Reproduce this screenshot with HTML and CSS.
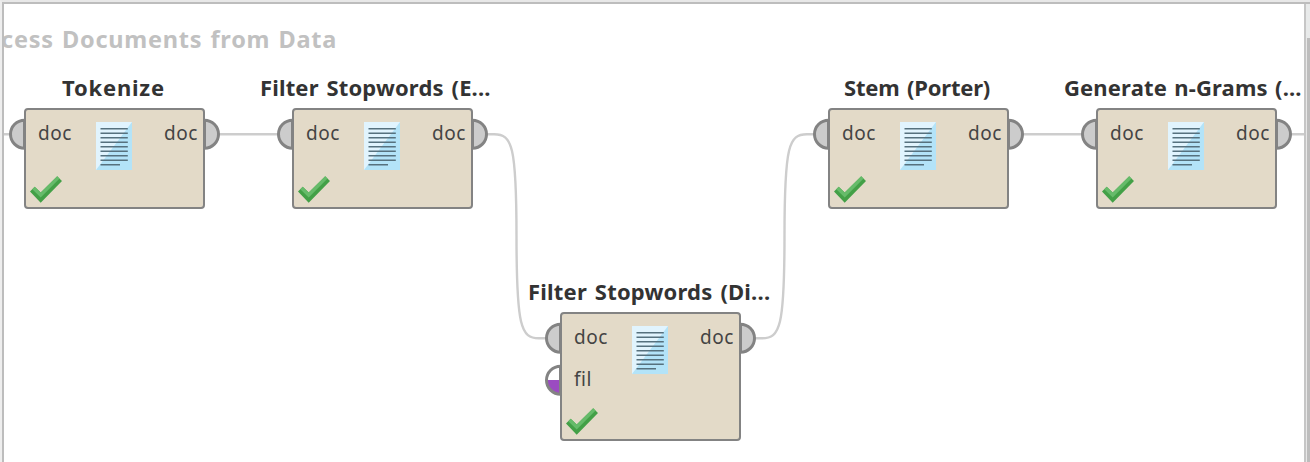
FILE: index.html
```
<!DOCTYPE html>
<html lang="en">
<head>
<meta charset="utf-8">
<title>Process Documents from Data</title>
<link rel="stylesheet" href="styles.css">
</head>
<body>
<svg class="defs" width="0" height="0" aria-hidden="true">
  <symbol id="page" viewBox="0 0 36 48">
    <path fill="#b3e3f8" d="M0 0h36v48H0z"/>
    <path fill="#e1f4fe" d="M0 0h36L0 48z"/>
    <path stroke="#56717e" stroke-width="1.400" d="M4.500 6.700h27.300M4.500 11.300h27.300M4.500 15.700h27.300M4.500 20.200h27.300M4.500 24.700h27.300M4.500 29.200h27.300M4.500 33.700h27.300M4.500 38.200h27.300M4.500 42.700h19.500"/>
  </symbol>
  <symbol id="tick" viewBox="0 0 32 27">
    <path fill="#43a047" d="M0 15.500l4.700-4.700 6 5.800L27.200.2l4.800 4.900-21.300 21.700z"/>
    <path fill="#66bb6a" d="M2.300 13.200l2.400-2.400 6 5.800L27.200.2l2.400 2.400-18.900 19z"/>
  </symbol>
  <symbol id="port" viewBox="0 0 17 32">
    <path fill="#ccc" stroke="#838383" stroke-width="3" d="M15.500 2.200a14 14 0 0 0 0 28z"/>
  </symbol>
  <symbol id="port-file" viewBox="0 0 17 32">
    <path fill="#fff" d="M15.500 2.200a14 14 0 0 0 0 28z"/>
    <path fill="#9b4bc1" d="M1.500 16h14v14.200a14 14 0 0 1-14-14.200z"/>
    <path fill="none" stroke="#838383" stroke-width="3" d="M15.500 2.200a14 14 0 0 0 0 28z"/>
  </symbol>
</svg>
<main class="canvas">
  <h1 class="heading">cess Documents from Data</h1>
  <svg class="wires" viewBox="0 0 1310 462">
    <path d="M4 134.300H10M219 134.300H278M1023 134.300H1082M1291 134.300H1304"/>
    <path d="M487 134.300H494C512 134.300 516.500 145 516.500 236C516.500 327 521 338.300 539 338.300H546"/>
    <path d="M755 338.300H762C780 338.300 784.500 327 784.500 236C784.500 145 789 134.300 807 134.300H814"/>
  </svg>

  <section class="node tokenize">
    <h2 class="title">Tokenize</h2>
    <div class="row"><span>doc</span><span>doc</span></div>
    <svg class="page"><use href="#page"/></svg><svg class="tick"><use href="#tick"/></svg>
    <svg class="port in"><use href="#port"/></svg><svg class="port out"><use href="#port"/></svg>
  </section>
  <section class="node english">
    <h2 class="title">Filter Stopwords (E...</h2>
    <div class="row"><span>doc</span><span>doc</span></div>
    <svg class="page"><use href="#page"/></svg><svg class="tick"><use href="#tick"/></svg>
    <svg class="port in"><use href="#port"/></svg><svg class="port out"><use href="#port"/></svg>
  </section>
  <section class="node dictionary">
    <h2 class="title">Filter Stopwords (Di...</h2>
    <div class="row"><span>doc</span><span>doc</span></div>
    <div class="row second"><span>fil</span></div>
    <svg class="page"><use href="#page"/></svg><svg class="tick"><use href="#tick"/></svg>
    <svg class="port in"><use href="#port"/></svg><svg class="port out"><use href="#port"/></svg>
    <svg class="port in file"><use href="#port-file"/></svg>
  </section>
  <section class="node stem">
    <h2 class="title">Stem (Porter)</h2>
    <div class="row"><span>doc</span><span>doc</span></div>
    <svg class="page"><use href="#page"/></svg><svg class="tick"><use href="#tick"/></svg>
    <svg class="port in"><use href="#port"/></svg><svg class="port out"><use href="#port"/></svg>
  </section>
  <section class="node ngrams">
    <h2 class="title">Generate n-Grams (...</h2>
    <div class="row"><span>doc</span><span>doc</span></div>
    <svg class="page"><use href="#page"/></svg><svg class="tick"><use href="#tick"/></svg>
    <svg class="port in"><use href="#port"/></svg><svg class="port out"><use href="#port"/></svg>
  </section>
  <div class="scrollbar"><div class="thumb"></div></div>
</main>
</body>
</html>
```
FILE: styles.css
```
* { box-sizing: border-box; }
body { margin: 0; background: #eee; font-family: "Noto Sans", "Open Sans", sans-serif; }
.defs { position: absolute; }
.canvas {
  position: relative;
  width: 1310px;
  height: 462px;
  overflow: hidden;
  background: #fff;
  border-top: 2px solid #e8e8e8;
  border-left: 2px solid #eee;
  box-shadow: inset 2px 2px 0 #bdbdbd;
}
.heading {
  margin: 0 0 0 2px;
  padding: 20px 0 0;
  text-indent: -3px;
  overflow: hidden;
  font-size: 23.500px;
  line-height: 34px;
  font-weight: 700;
  letter-spacing: 0.750px;
  word-spacing: 1.400px;
  color: #c1c1c1;
  white-space: nowrap;
}
.wires {
  position: absolute;
  left: -2px;
  top: -2px;
  width: 1310px;
  height: 462px;
  fill: none;
  stroke: #cdcdcd;
  stroke-width: 2.4;
}
.node {
  position: absolute;
  top: 105.500px;
  width: 181.500px;
  height: 102px;
  padding: 9px 7.500px 0 14px;
}
.node::before {
  content: "";
  position: absolute;
  inset: 0 1px 1px 0;
  background: #e3dac8;
  border: 2px solid #838383;
  border-radius: 4px;
}
.tokenize { left: 22px; }
.english { left: 290px; }
.dictionary { left: 558px; top: 309.500px; height: 130px; }
.stem { left: 826px; }
.ngrams { left: 1094px; }
.title {
  position: absolute;
  top: -37px;
  left: 38px;
  margin: 0;
  font-size: 22px;
  line-height: 32px;
  font-weight: 700;
  letter-spacing: 0.150px;
  word-spacing: 2px;
  color: #333;
  white-space: nowrap;
}
.tokenize .title { letter-spacing: 0.800px; }
.english .title, .dictionary .title, .ngrams .title { left: -32px; }
.dictionary .title { letter-spacing: 0.200px; }
.ngrams .title { word-spacing: 1.500px; }
.stem .title { left: 16px; letter-spacing: -0.200px; }
.row {
  position: relative;
  display: flex;
  justify-content: space-between;
  font-size: 19px;
  line-height: 32px;
  letter-spacing: 0.550px;
  color: #444;
}
.second { margin-top: 10px; }
.page { position: absolute; left: 72px; top: 14.500px; width: 36px; height: 48px; }
.tick { position: absolute; left: 6px; bottom: 6.500px; width: 32px; height: 27px; }
.port { position: absolute; top: 10.500px; width: 17px; height: 32px; }
.in { left: -15px; }
.out { right: -14.500px; transform: scaleX(-1); }
.file { top: 52.500px; }
.scrollbar {
  position: absolute;
  top: 2px;
  right: 0;
  width: 6px;
  height: 460px;
  padding-top: 34px;
  background: #e8eaea;
  border-left: 2px solid #c6c6c6;
}
.thumb { height: 424px; background: #bdbdbd; border-left: 1px solid #e8e8e8; }
```
